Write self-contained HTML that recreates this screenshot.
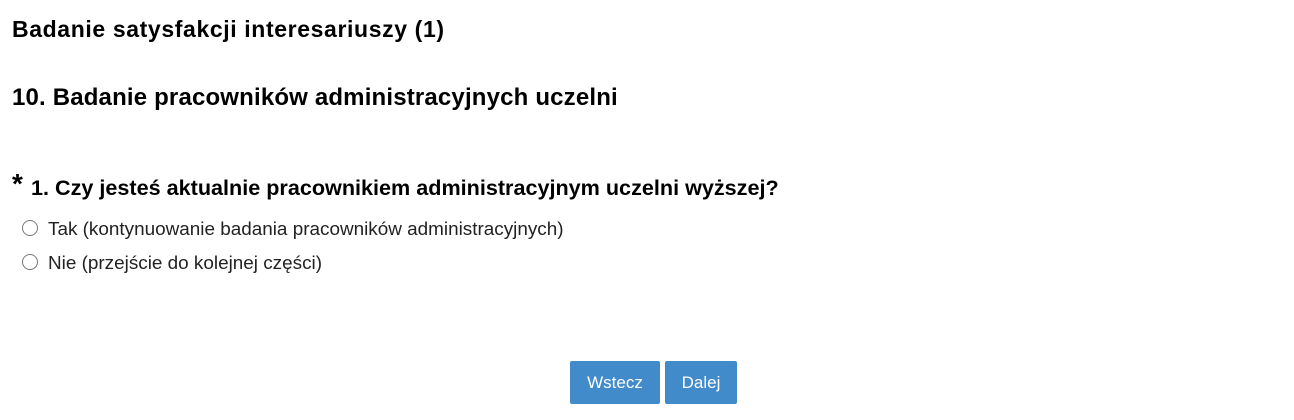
<!DOCTYPE html>
<html><head><meta charset="utf-8"><style>
body{margin:0;width:1294px;height:420px;background:#fff;font-family:"Liberation Sans",Arial,sans-serif;color:#000;position:relative;overflow:hidden}
.a{position:absolute;white-space:nowrap;line-height:1}
.t1{left:12px;top:18px;font-size:23px;font-weight:bold;letter-spacing:0.62px}
.t2{left:12px;top:86px;font-size:24px;font-weight:bold;letter-spacing:0.17px}
.star{left:12px;top:170px;font-size:28px;font-weight:bold}
.q{left:31px;top:177px;font-size:21.6px;font-weight:bold}
.o{left:22px;font-size:18.9px;color:#222}
.o i{display:inline-block;width:14px;height:14px;border:1px solid #767676;border-radius:50%;vertical-align:-1px;margin-right:10px}
.btn{position:absolute;top:361px;height:43px;background:#428bca;color:#fff;border-radius:2px;font-size:17px;text-align:center;line-height:43px}
</style></head><body>
<div class="a t1">Badanie satysfakcji interesariuszy (1)</div>
<div class="a t2">10. Badanie pracowników administracyjnych uczelni</div>
<div class="a star">*</div>
<div class="a q">1. Czy jesteś aktualnie pracownikiem administracyjnym uczelni wyższej?</div>
<div class="a o" style="top:220px"><i></i>Tak (kontynuowanie badania pracowników administracyjnych)</div>
<div class="a o" style="top:254px"><i></i>Nie (przejście do kolejnej części)</div>
<div class="btn" style="left:570px;width:90px">Wstecz</div>
<div class="btn" style="left:665px;width:72px">Dalej</div>
</body></html>
